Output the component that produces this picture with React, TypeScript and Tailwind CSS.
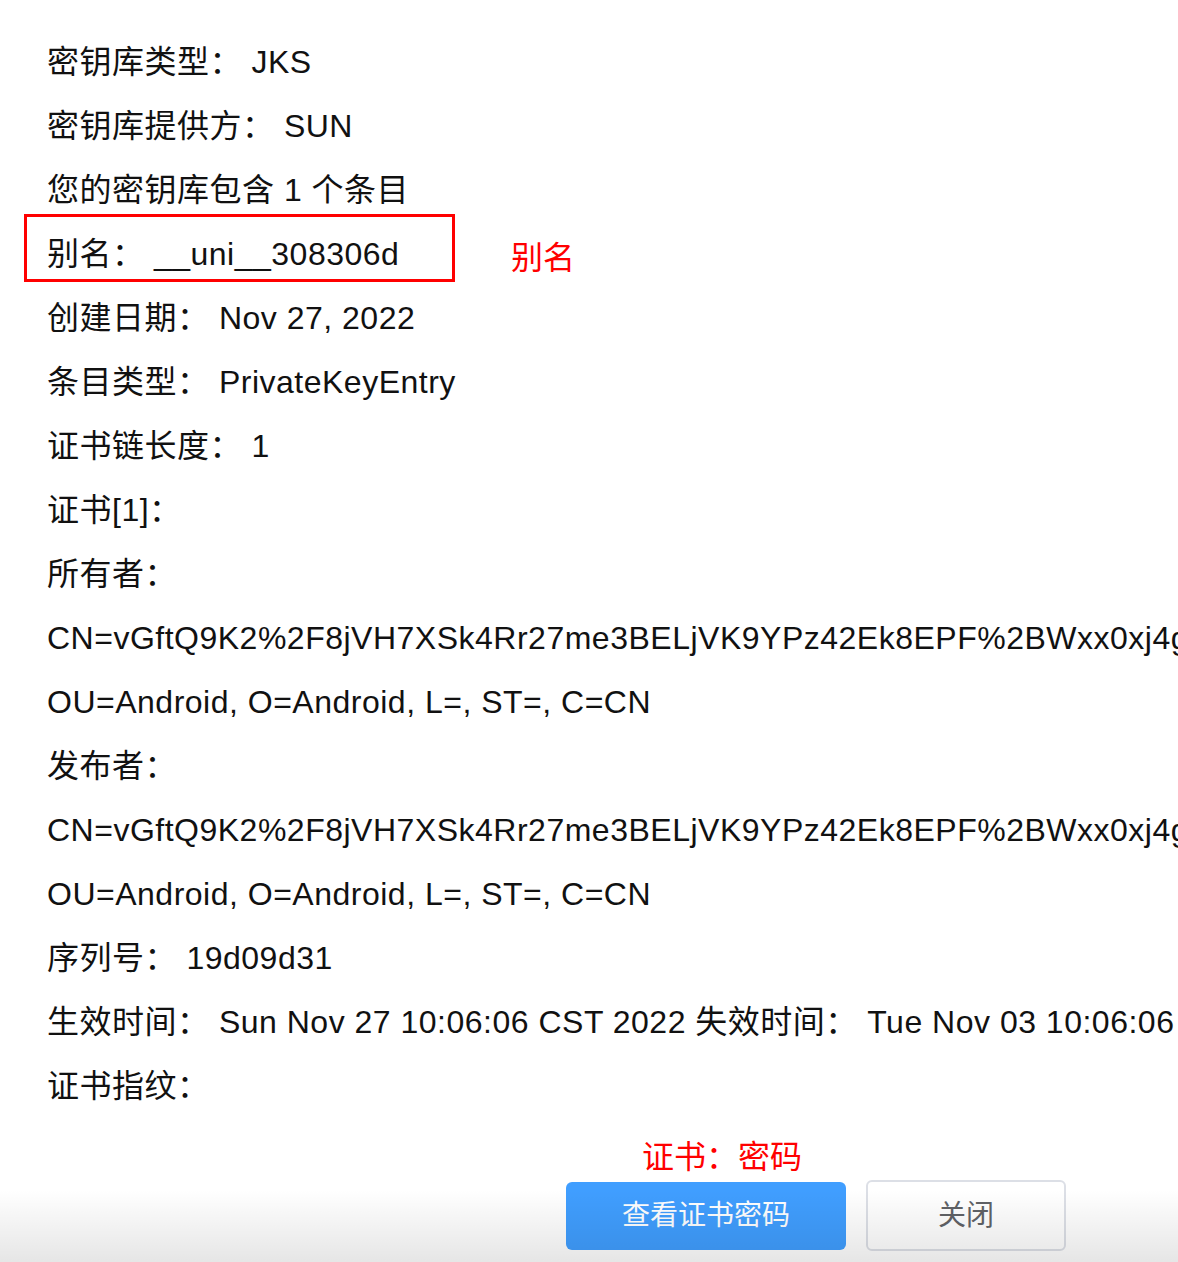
const lines = [
  '密钥库类型： JKS',
  '密钥库提供方： SUN',
  '您的密钥库包含 1 个条目',
  '别名： __uni__308306d',
  '创建日期： Nov 27, 2022',
  '条目类型： PrivateKeyEntry',
  '证书链长度： 1',
  '证书[1]：',
  '所有者：',
  'CN=vGftQ9K2%2F8jVH7XSk4Rr27me3BELjVK9YPz42Ek8EPF%2BWxx0xj4g%3D%3D',
  'OU=Android, O=Android, L=, ST=, C=CN',
  '发布者：',
  'CN=vGftQ9K2%2F8jVH7XSk4Rr27me3BELjVK9YPz42Ek8EPF%2BWxx0xj4g%3D%3D',
  'OU=Android, O=Android, L=, ST=, C=CN',
  '序列号： 19d09d31',
  '生效时间： Sun Nov 27 10:06:06 CST 2022 失效时间： Tue Nov 03 10:06:06 CST 2122',
  '证书指纹：',
];

const App = () => {
  return (
    <div
      className="relative w-[1178px] h-[1262px] overflow-hidden bg-white"
      style={{ fontFamily: '"Liberation Sans", "Noto Sans CJK SC", sans-serif' }}
    >
      {/* Keystore details */}
      <div className="pt-[30px] pl-[47px] whitespace-nowrap text-[32px] leading-[64px] tracking-[0.5px] text-[#111]">
        {lines.map((line, index) => (
          <div key={index} className="h-[64px]">
            {line}
          </div>
        ))}
      </div>

      {/* Footer */}
      <div className="mt-[19px] h-[40px] pl-[642px] text-[32px] leading-[40px] text-[#ff0000] whitespace-nowrap">
        证书：密码
      </div>
      <div className="mt-[3px] flex items-start pl-[566px]">
        <button className="mt-[2px] w-[280px] h-[68px] rounded-[6px] bg-[#409eff] text-white text-[28px]">
          查看证书密码
        </button>
        <button className="ml-[20px] w-[200px] h-[71px] rounded-[6px] border-2 border-[#dcdfe6] bg-white text-[#606266] text-[28px]">
          关闭
        </button>
      </div>

      {/* Annotations */}
      <div className="absolute left-[24px] top-[214px] w-[431px] h-[68px] border-[3px] border-[#ff0000]"></div>
      <div className="absolute left-[511px] top-[226px] text-[32px] leading-[64px] text-[#ff0000] whitespace-nowrap">
        别名
      </div>

      {/* Bottom fade */}
      <div className="pointer-events-none absolute inset-x-0 bottom-0 h-[72px] bg-gradient-to-b from-transparent to-black/10"></div>
    </div>
  );
};

export default App;
